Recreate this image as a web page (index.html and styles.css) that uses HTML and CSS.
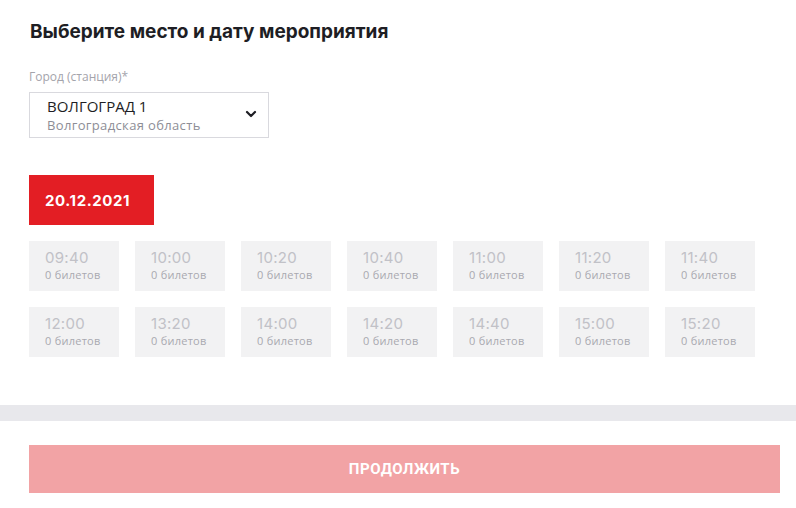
FILE: index.html
```html
<!DOCTYPE html>
<html lang="ru">
<head>
<meta charset="utf-8">
<link rel="stylesheet" href="styles.css">
</head>
<body>
<div class="page">
  <section class="content">
    <h1 class="title">Выберите место и дату мероприятия</h1>
    <div class="field">
      <div class="label">Город (станция)*</div>
      <div class="select">
        <div class="select-text">
          <div class="select-main">ВОЛГОГРАД 1</div>
          <div class="select-sub">Волгоградская область</div>
        </div>
        <svg class="chevron" width="12" height="8" viewBox="0 0 12 8"><path d="M2 2 L6 6 L10 2" fill="none" stroke="#1e1e24" stroke-width="2.2" stroke-linecap="round" stroke-linejoin="round"/></svg>
      </div>
    </div>
    <div class="date">20.12.2021</div>
    <div class="slots">
      <div class="slot"><div class="time">09:40</div><div class="count">0 билетов</div></div>
      <div class="slot"><div class="time">10:00</div><div class="count">0 билетов</div></div>
      <div class="slot"><div class="time">10:20</div><div class="count">0 билетов</div></div>
      <div class="slot"><div class="time">10:40</div><div class="count">0 билетов</div></div>
      <div class="slot"><div class="time">11:00</div><div class="count">0 билетов</div></div>
      <div class="slot"><div class="time">11:20</div><div class="count">0 билетов</div></div>
      <div class="slot"><div class="time">11:40</div><div class="count">0 билетов</div></div>
      <div class="slot"><div class="time">12:00</div><div class="count">0 билетов</div></div>
      <div class="slot"><div class="time">13:20</div><div class="count">0 билетов</div></div>
      <div class="slot"><div class="time">14:00</div><div class="count">0 билетов</div></div>
      <div class="slot"><div class="time">14:20</div><div class="count">0 билетов</div></div>
      <div class="slot"><div class="time">14:40</div><div class="count">0 билетов</div></div>
      <div class="slot"><div class="time">15:00</div><div class="count">0 билетов</div></div>
      <div class="slot"><div class="time">15:20</div><div class="count">0 билетов</div></div>
    </div>
  </section>
  <div class="band"></div>
  <div class="footer">
    <button class="continue">ПРОДОЛЖИТЬ</button>
  </div>
</div>
</body>
</html>
```

FILE: styles.css
```css
* { box-sizing: border-box; }
html, body { margin: 0; padding: 0; background: #fff; }
body { font-family: "Open Sans", "Noto Sans", sans-serif; color: #1e1e24; }
.page { width: 796px; height: 508px; overflow: hidden; }
.content { padding: 20px 0 0 29px; }
.title {
  margin: 0 0 0 1px;
  font-family: "Inter", sans-serif;
  font-size: 19px;
  font-weight: 700;
  line-height: 24px;
  color: #1e1e24;
}
.field { margin-top: 25px; }
.label {
  font-size: 12px;
  line-height: 16px;
  color: #a4a4ab;
  margin-bottom: 7px;
}
.select {
  width: 240px;
  height: 46px;
  border: 1px solid #d9d9de;
  display: flex;
  align-items: center;
  justify-content: space-between;
  padding: 0 11px 0 17px;
}
.select-main { font-size: 15px; line-height: 20px; color: #1e1e24; }
.select-sub { font-size: 13px; line-height: 18px; color: #8e8e96; letter-spacing: 0.35px; }
.chevron { display: block; margin-top: -2px; }
.date {
  margin-top: 37px;
  width: 125px;
  height: 50px;
  background: #e31e24;
  color: #fff;
  font-family: "Inter", sans-serif;
  font-weight: 700;
  font-size: 15px;
  letter-spacing: 0.6px;
  display: flex;
  align-items: center;
  padding-left: 16px;
}
.slots {
  margin-top: 16px;
  display: grid;
  grid-template-columns: repeat(7, 90px);
  grid-auto-rows: 50px;
  gap: 16px;
}
.slot {
  background: #f2f2f3;
  padding: 8px 0 0 16px;
}
.time {
  font-family: "Inter", sans-serif;
  font-size: 15px;
  line-height: 18px;
  color: #c1c1c7;
  letter-spacing: 0.3px;
}
.count {
  font-size: 11px;
  line-height: 15px;
  color: #a9a9b0;
  letter-spacing: 0.25px;
}
.band {
  margin-top: 48px;
  height: 16px;
  background: #e8e8ec;
}
.footer { padding: 24px 16px 0 29px; }
.continue {
  width: 751px;
  height: 48px;
  border: 0;
  background: #f2a3a5;
  color: #fff;
  font-family: "Liberation Sans Narrow", "Roboto", sans-serif;
  font-weight: 700;
  font-size: 15px;
  letter-spacing: 0.5px;
  padding: 0;
  display: block;
}
```
